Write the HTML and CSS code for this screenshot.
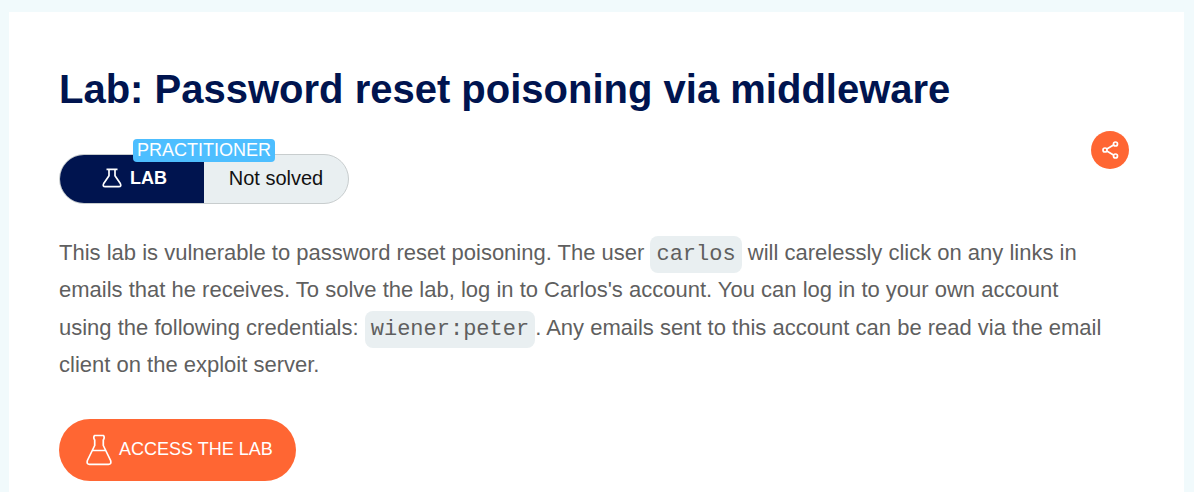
FILE: index.html
```html
<!DOCTYPE html>
<html lang="en">
<head>
<meta charset="utf-8">
<meta name="viewport" content="width=device-width, initial-scale=1">
<title>Lab: Password reset poisoning via middleware</title>
<link rel="stylesheet" href="styles.css">
</head>
<body>
<main class="card">
  <h1 class="title">Lab: Password reset poisoning via middleware</h1>
  <div class="meta">
    <div class="status">
      <span class="level">PRACTITIONER</span>
      <div class="kind">
        <svg class="kind-icon" viewBox="0 0 20 20" fill="none" stroke="currentColor" stroke-width="1.7" stroke-linejoin="round" aria-hidden="true"><path d="M4.500 1.300h11M7 1.500v6.200L1.700 15.500Q.2 18.700 3.200 18.700h13.600Q19.800 18.700 18.300 15.500L13 7.700V1.500"/></svg>
        <span>LAB</span>
      </div>
      <div class="state">Not solved</div>
    </div>
    <button class="share" type="button" aria-label="Share">
      <svg class="share-icon" viewBox="0 0 38 38" fill="none" stroke="currentColor" stroke-width="1.700" aria-hidden="true"><path d="M15.800 18 22.500 14M15.800 20 22.500 24"/><circle cx="14" cy="19" r="2"/><circle cx="24.500" cy="13" r="2"/><circle cx="24.500" cy="25" r="2"/></svg>
    </button>
  </div>
  <p class="description">This lab is vulnerable to password reset poisoning. The user <code class="code">carlos</code> will carelessly click on any links in emails that he receives. To solve the lab, log in to Carlos's account. You can log in to your own account using the following credentials: <code class="code">wiener:peter</code>. Any emails sent to this account can be read via the email client on the exploit server.</p>
  <a class="access" href="#">
    <svg class="access-icon" viewBox="0 0 26 32" fill="none" stroke="currentColor" stroke-width="1.700" stroke-linejoin="round" aria-hidden="true"><path d="M8.500 1.500h9Q19 3.500 17.300 6V11.500L24.600 26.500Q25.600 30.300 22.500 30.300H3.500Q.4 30.300 1.400 26.500L8.700 11.500V6Q7 3.500 8.500 1.500ZM6.300 16.500h13.400"/></svg>
    <span>ACCESS THE LAB</span>
  </a>
</main>
</body>
</html>
```
FILE: styles.css
```css
* {
  box-sizing: border-box;
}

body {
  margin: 0;
  padding: 12px 10px 0 9px;
  background: #f1fafc;
  font-family: "Liberation Sans", Arial, sans-serif;
}

.card {
  min-height: calc(100vh - 12px);
  padding: 52px 50px 10px;
  background: #fff;
}

.title {
  margin: 0;
  color: #00144f;
  font-size: 40px;
  line-height: 50px;
}

.meta {
  display: flex;
  align-items: flex-start;
  justify-content: space-between;
  margin-top: 17px;
  padding-right: 5px;
}

.status {
  position: relative;
  display: flex;
  height: 50px;
  margin-top: 23px;
  border: 1px solid #c8cdce;
  border-radius: 25px;
  background: #e9eff1;
}

.level {
  position: absolute;
  top: -16px;
  left: 73px;
  padding: 0 4px;
  border-radius: 4px;
  background: #4dbeff;
  color: #fff;
  font-size: 18px;
  line-height: 23px;
}

.kind {
  display: flex;
  align-items: center;
  justify-content: center;
  gap: 8px;
  width: 144px;
  padding: 0 0 2px 5px;
  border-radius: 24px 0 0 24px;
  background: #00144f;
  color: #fff;
  font-size: 18px;
  font-weight: 700;
}

.kind-icon {
  width: 20px;
  height: 20px;
}

.state {
  width: 144px;
  color: #111;
  font-size: 20px;
  line-height: 46px;
  text-align: center;
}

.share {
  display: grid;
  place-items: center;
  width: 38px;
  height: 38px;
  padding: 0;
  border: 0;
  border-radius: 50%;
  background: #ff6633;
  color: #fff;
}

.share-icon {
  width: 38px;
  height: 38px;
}

.description {
  margin: 30px 0 35px;
  padding-right: 28px;
  color: #5f5f5f;
  font-size: 22px;
  line-height: 1.7;
}

.code {
  padding: 6px;
  border-radius: 8px;
  background: #e9eff1;
  font-family: "Liberation Mono", monospace;
  font-size: 22px;
  line-height: 1;
}

.access {
  display: inline-flex;
  align-items: center;
  gap: 7px;
  height: 62px;
  padding: 0 23px 0 27px;
  border-radius: 31px;
  background: #ff6633;
  color: #fff;
  font-size: 18px;
  text-decoration: none;
}

.access-icon {
  width: 26px;
  height: 32px;
}
```
